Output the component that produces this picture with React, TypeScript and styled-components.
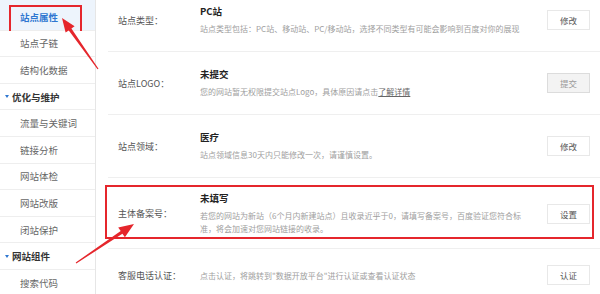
import React from "react";
import styled, { createGlobalStyle } from "styled-components";

const Global = createGlobalStyle`
  html, body { margin: 0; padding: 0; background: #fff; }
  body { font-family: "Noto Sans CJK SC", "Noto Sans", sans-serif; }
  * { box-sizing: border-box; }
`;

const RED = "#e5262c";

const Page = styled.div`
  position: relative;
  width: 600px;
  height: 294px;
  overflow: hidden;
  display: flex;
  background: #fff;
`;

const Sidebar = styled.nav`
  width: 96px;
  flex: none;
  border-right: 1px solid #e6e6e6;
  display: flex;
  flex-direction: column;
`;

const NavItem = styled.div<{ $active?: boolean; $first?: boolean; $header?: boolean }>`
  position: relative;
  flex: none;
  height: ${(p) => (p.$first ? "30.6px" : "26.6px")};
  padding-top: ${(p) => (p.$first ? "4px" : "0")};
  padding-left: ${(p) => (p.$header ? "5px" : "20px")};
  border-bottom: 1px solid #eeeeee;
  display: flex;
  align-items: center;
  font-size: 9.5px;
  white-space: nowrap;
  background: ${(p) => (p.$active ? "#edf4fc" : "#fff")};
  color: ${(p) => (p.$active ? "#2f77d1" : p.$header ? "#333" : "#666")};
  font-weight: ${(p) => (p.$header || p.$active ? 700 : 400)};
  ${(p) =>
    p.$active
      ? `&::after {
    content: "";
    position: absolute;
    left: 9px;
    top: 5px;
    width: 69px;
    height: 24px;
    border: 2px solid ${RED};
  }`
      : ""}
`;

const Caret = styled.span`
  width: 0;
  height: 0;
  border-left: 2.5px solid transparent;
  border-right: 2.5px solid transparent;
  border-top: 3px solid #2f77d1;
  margin-right: 3px;
`;

const Main = styled.main`
  flex: 1;
  padding-left: 12px;
  display: flex;
  flex-direction: column;
`;

const Row = styled.section<{ $first?: boolean; $boxed?: boolean }>`
  flex: none;
  border-bottom: 1px solid #efefef;
  padding: ${(p) => (p.$first ? "5px 0 16px" : p.$boxed ? "7px 0 9px" : "16px 0 16px")};
`;

const RowInner = styled.div<{ $boxed?: boolean }>`
  display: flex;
  align-items: center;
  ${(p) =>
    p.$boxed
      ? `border: 2px solid ${RED};
    margin: 0 6px 0 -3px;
    padding: 5px 2px 2px 11px;`
      : `padding: 0 10px;`}
`;

const Label = styled.div`
  width: 82px;
  flex: none;
  font-size: 9px;
  color: #555;
  white-space: nowrap;
`;

const Content = styled.div`
  flex: 1;
  min-width: 0;
`;

const Title = styled.div`
  font-size: 9.5px;
  line-height: 12px;
  font-weight: 700;
  color: #222;
  margin-bottom: 5px;
  white-space: nowrap;
`;

const Desc = styled.div`
  font-size: 8px;
  line-height: 13px;
  color: #a0a0a0;
  white-space: nowrap;
`;

const Link = styled.span`
  color: #666;
  text-decoration: underline;
`;

const Button = styled.button<{ $disabled?: boolean }>`
  flex: none;
  width: 43px;
  height: 20px;
  padding: 0;
  border: 1px solid ${(p) => (p.$disabled ? "#dcdcdc" : "#e8e8e8")};
  background: ${(p) => (p.$disabled ? "#f3f3f3" : "#fff")};
  color: ${(p) => (p.$disabled ? "#999" : "#555")};
  font-family: "Noto Sans CJK SC", sans-serif;
  font-size: 8.5px;
  cursor: pointer;
`;

const Overlay = styled.svg`
  position: absolute;
  left: 0;
  top: 0;
  pointer-events: none;
`;

type Arrow = { tip: [number, number]; tail: [number, number]; len: number; half: number };

function arrowPoints(a: Arrow) {
  const [tx, ty] = a.tip;
  const [sx, sy] = a.tail;
  const dx = sx - tx;
  const dy = sy - ty;
  const l = Math.hypot(dx, dy);
  const ux = dx / l;
  const uy = dy / l;
  const nx = -uy;
  const ny = ux;
  const bx = tx + ux * a.len;
  const by = ty + uy * a.len;
  const pts: [number, number][] = [
    [tx, ty],
    [bx + nx * a.half, by + ny * a.half],
    [bx + nx * 1.6, by + ny * 1.6],
    [sx + nx * 0.6, sy + ny * 0.6],
    [sx - nx * 0.6, sy - ny * 0.6],
    [bx - nx * 1.6, by - ny * 1.6],
    [bx - nx * a.half, by - ny * a.half],
  ];
  return pts.map((p) => `${p[0].toFixed(1)},${p[1].toFixed(1)}`).join(" ");
}

const arrows: Arrow[] = [
  { tip: [62, 18], tail: [98, 69], len: 14, half: 5.5 },
  { tip: [134, 224], tail: [76, 263], len: 15, half: 6 },
];

const navItems: { text: string; active?: boolean; header?: boolean }[] = [
  { text: "站点属性", active: true },
  { text: "站点子链" },
  { text: "结构化数据" },
  { text: "优化与维护", header: true },
  { text: "流量与关键词" },
  { text: "链接分析" },
  { text: "网站体检" },
  { text: "网站改版" },
  { text: "闭站保护" },
  { text: "网站组件", header: true },
  { text: "搜索代码" },
];

export default function App() {
  return (
    <>
      <Global />
      <Page>
        <Sidebar>
          {navItems.map((it, i) => (
            <NavItem key={it.text} $first={i === 0} $active={it.active} $header={it.header}>
              {it.header && <Caret />}
              {it.text}
            </NavItem>
          ))}
        </Sidebar>
        <Main>
          <Row $first>
            <RowInner>
              <Label>站点类型：</Label>
              <Content>
                <Title>PC站</Title>
                <Desc>站点类型包括：PC站、移动站、PC/移动站，选择不同类型有可能会影响到百度对你的展现</Desc>
              </Content>
              <Button>修改</Button>
            </RowInner>
          </Row>
          <Row>
            <RowInner>
              <Label>站点LOGO：</Label>
              <Content>
                <Title>未提交</Title>
                <Desc>
                  您的网站暂无权限提交站点Logo，具体原因请点击<Link>了解详情</Link>
                </Desc>
              </Content>
              <Button $disabled>提交</Button>
            </RowInner>
          </Row>
          <Row>
            <RowInner>
              <Label>站点领域：</Label>
              <Content>
                <Title>医疗</Title>
                <Desc>站点领域信息30天内只能修改一次，请谨慎设置。</Desc>
              </Content>
              <Button>修改</Button>
            </RowInner>
          </Row>
          <Row $boxed>
            <RowInner $boxed>
              <Label>主体备案号：</Label>
              <Content>
                <Title>未填写</Title>
                <Desc>
                  若您的网站为新站（6个月内新建站点）且收录近乎于0，请填写备案号，百度验证您符合标
                  <br />
                  准，将会加速对您网站链接的收录。
                </Desc>
              </Content>
              <Button>设置</Button>
            </RowInner>
          </Row>
          <Row>
            <RowInner>
              <Label>客服电话认证：</Label>
              <Content>
                <Desc>点击认证，将跳转到"数据开放平台"进行认证或查看认证状态</Desc>
              </Content>
              <Button>认证</Button>
            </RowInner>
          </Row>
        </Main>
        <Overlay width="600" height="294" viewBox="0 0 600 294">
          {arrows.map((a, i) => (
            <polygon key={i} points={arrowPoints(a)} fill={RED} />
          ))}
        </Overlay>
      </Page>
    </>
  );
}
